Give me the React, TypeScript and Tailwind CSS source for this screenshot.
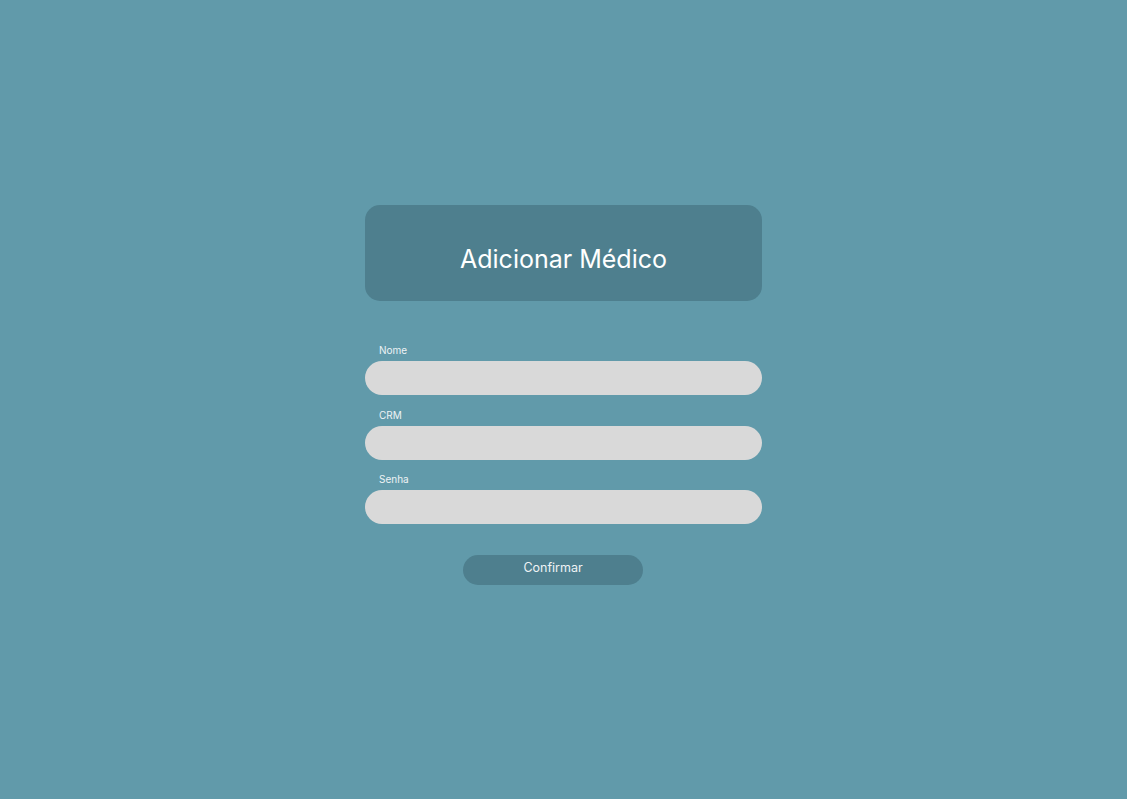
export default function App() {
  return (
    <div
      className="w-full h-[799px] bg-[#619AAA] flex flex-col items-center pt-[205px]"
      style={{ fontFamily: "Inter, 'Noto Sans', sans-serif" }}
    >
      <div className="w-[397px] flex flex-col">
        {/* header */}
        <div className="h-[96px] rounded-[15px] bg-[#4E7F8E] flex items-center justify-center pt-[12px]">
          <h1 className="text-[25px] font-normal text-white leading-none">Adicionar Médico</h1>
        </div>

        {/* fields */}
        <div className="mt-[43px] flex flex-col gap-[13.5px]">
          {["Nome", "CRM", "Senha"].map((label) => (
            <div key={label} className="flex flex-col gap-[5px]">
              <label className="pl-[14px] text-[10px] leading-[12px] text-[#EEF3F5]">{label}</label>
              <input
                type={label === "Senha" ? "password" : "text"}
                className="h-[34px] w-full rounded-full bg-[#D9D9D9] px-4 text-sm text-gray-800 outline-none"
              />
            </div>
          ))}
        </div>

        <button className="mt-[31px] ml-[98px] w-[180px] h-[30px] pb-[4px] rounded-full bg-[#4E7F8E] text-[12.5px] text-[#EEF3F5]">
          Confirmar
        </button>
      </div>
    </div>
  );
}
